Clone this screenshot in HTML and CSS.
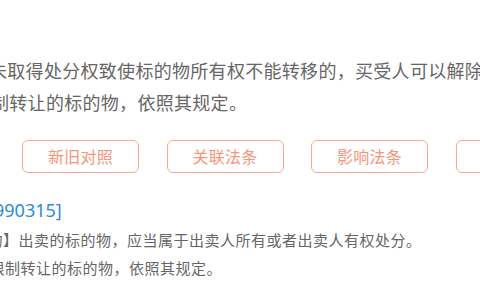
FILE: index.html
```html
<!DOCTYPE html>
<html lang="zh-CN">
<head>
<meta charset="utf-8">
<title>法条</title>
<link rel="stylesheet" href="styles.css">
</head>
<body>
<div class="page">
  <div class="para">
    <div class="line line-1">未取得处分权致使标的物所有权不能转移的，买受人可以解除合同。</div>
    <div class="line line-2">制转让的标的物，依照其规定。</div>
  </div>
  <div class="actions">
    <button class="btn" type="button">新旧对照</button>
    <button class="btn" type="button">关联法条</button>
    <button class="btn" type="button">影响法条</button>
    <button class="btn" type="button">法条释义</button>
  </div>
  <div class="code">990315]</div>
  <div class="article">
    <div class="aline aline-1">物】出卖的标的物，应当属于出卖人所有或者出卖人有权处分。</div>
    <div class="aline aline-2">限制转让的标的物，依照其规定。</div>
  </div>
</div>
</body>
</html>
```

FILE: styles.css
```css
html, body {
  margin: 0;
  padding: 0;
  background: #ffffff;
}

body {
  width: 480px;
  height: 300px;
  overflow: hidden;
  font-family: "Noto Sans CJK SC", "Noto Sans", sans-serif;
  color: #666666;
}

.page {
  padding-top: 54px;
}

.para {
  font-size: 18px;
  line-height: 32px;
  letter-spacing: 0.3px;
}

.line {
  white-space: nowrap;
}

.line-1 {
  margin-left: -11px;
}

.line-2 {
  margin-left: -9px;
}

.actions {
  display: flex;
  gap: 27.5px;
  margin-top: 22px;
  margin-left: 22px;
  white-space: nowrap;
}

.btn {
  flex: 0 0 117px;
  height: 33px;
  box-sizing: border-box;
  border: 1px solid #f9a891;
  border-radius: 6px;
  background: #ffffff;
  color: #f7957a;
  font-family: "Noto Sans CJK SC", sans-serif;
  font-size: 16px;
  letter-spacing: 0.25px;
  padding: 0;
  line-height: 31px;
}

.code {
  margin-top: 23px;
  margin-left: -6px;
  font-family: "Noto Sans", "Noto Sans CJK SC", sans-serif;
  font-size: 18px;
  line-height: 28px;
  color: #2e8ad6;
  white-space: nowrap;
}

.article {
  margin-top: 2px;
  font-size: 15px;
  line-height: 28px;
  letter-spacing: 0.5px;
}

.aline {
  white-space: nowrap;
}

.aline-1 {
  margin-left: -12.5px;
}

.aline-2 {
  margin-left: -10.5px;
}
```
